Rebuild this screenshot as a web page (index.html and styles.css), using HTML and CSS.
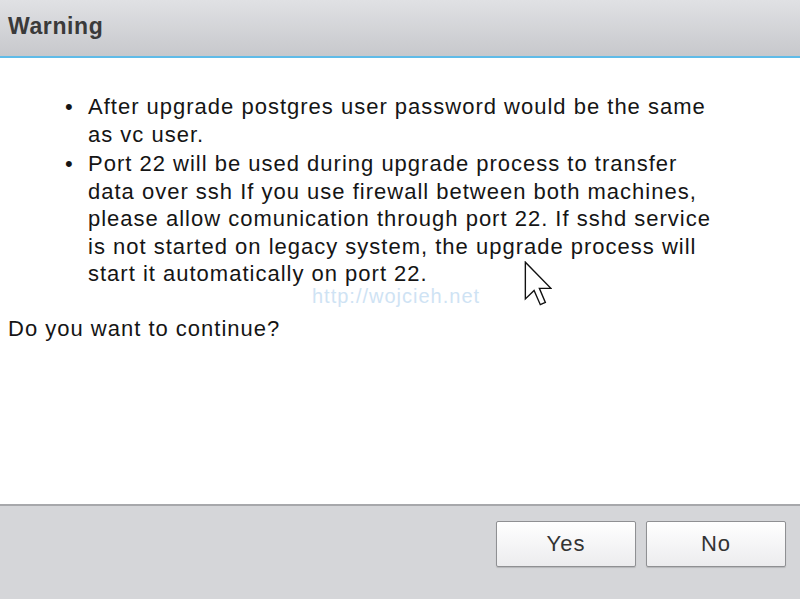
FILE: index.html
```html
<!DOCTYPE html>
<html lang="en">
<head>
    <meta charset="UTF-8">
    <meta name="viewport" content="width=device-width, initial-scale=1.0">
    <title>Warning</title>
    <link rel="stylesheet" href="styles.css">
</head>
<body>
    <div class="dialog">
        <div class="dialog-header">Warning</div>

        <div class="dialog-body">
            <ul class="notes">
                <li>After upgrade postgres user password would be the same as vc user.</li>
                <li>Port 22 will be used during upgrade process to transfer data over ssh If you use firewall between both machines, please allow comunication through port 22. If sshd service is not started on legacy system, the upgrade process will start it automatically on port 22.</li>
            </ul>
            <p class="question">Do you want to continue?</p>

            <span class="watermark">http://wojcieh.net</span>
            <svg class="cursor" width="28" height="46" viewBox="0 0 12 20">
                <path d="M0.5 0.5 L0.5 16.5 L4.3 12.8 L7 19 L9.2 18 L6.6 11.9 L11.6 11.9 Z" fill="#fff" stroke="#111" stroke-width="0.6" stroke-linejoin="miter"/>
            </svg>
        </div>

        <div class="dialog-footer">
            <button class="btn">Yes</button>
            <button class="btn">No</button>
        </div>
    </div>
</body>
</html>
```

FILE: styles.css
```css
body {
    margin: 0;
    padding: 0;
    font-family: "Liberation Sans", Arial, sans-serif;
    color: #151515;
    background-color: #fff;
}

.dialog {
    display: flex;
    flex-direction: column;
    height: 100vh;
}

.dialog-header {
    height: 58px;
    display: flex;
    align-items: center;
    padding-left: 8px;
    padding-bottom: 4px;
    box-sizing: border-box;
    background: linear-gradient(#e0e1e4, #c7c8cc);
    border-bottom: 2px solid #5fbbe8;
    font-size: 23px;
    font-weight: bold;
    letter-spacing: 0.6px;
    color: #3a3a3a;
}

.dialog-body {
    flex: 1;
    position: relative;
    padding: 35px 8px 0 8px;
    font-size: 22px;
    line-height: 27.5px;
    letter-spacing: 1px;
}

.notes {
    list-style: none;
    margin: 0;
    padding: 0 0 0 80px;
    width: 632px;
}

.notes li {
    padding-left: 0;
    text-indent: -23px;
}

.notes li + li {
    margin-top: 2px;
}

.notes li::before {
    content: "\2022";
    display: inline-block;
    width: 23px;
    text-indent: 0;
    letter-spacing: 0;
}

.question {
    margin: 27px 0 0 0;
}

.watermark {
    position: absolute;
    left: 312px;
    top: 228px;
    font-size: 20px;
    line-height: 20px;
    letter-spacing: 1px;
    color: #cfe3f4;
}

.cursor {
    position: absolute;
    left: 524px;
    top: 203px;
}

.dialog-footer {
    height: 95px;
    box-sizing: border-box;
    display: flex;
    justify-content: flex-end;
    align-items: flex-start;
    gap: 10px;
    padding: 15px 14px 0 0;
    background-color: #d5d6d9;
    border-top: 2px solid #a7a8ab;
}

.btn {
    width: 140px;
    height: 46px;
    border: 1px solid #8f9093;
    border-radius: 2px;
    background: linear-gradient(#ffffff, #ececee);
    box-shadow: 0 1px 1px rgba(0, 0, 0, 0.15);
    font-family: "Liberation Sans", Arial, sans-serif;
    font-size: 22px;
    letter-spacing: 1px;
    color: #333;
    cursor: pointer;
}
```
